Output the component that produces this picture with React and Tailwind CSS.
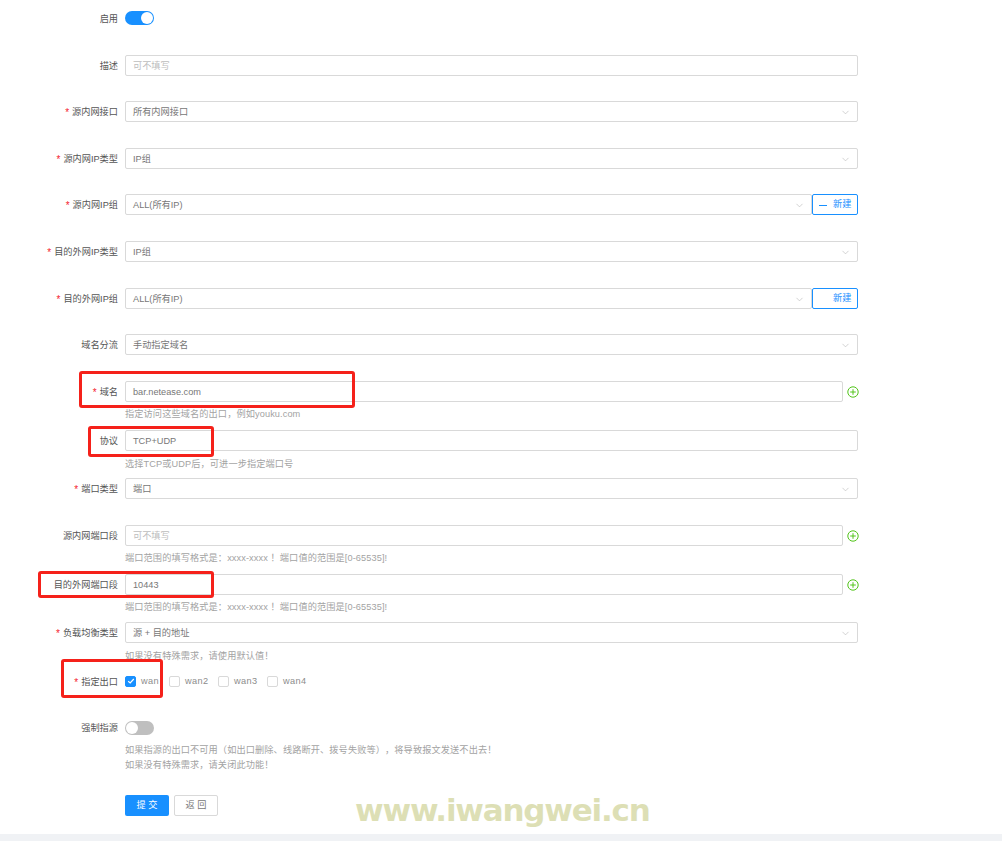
import React from 'react';
import { ChevronDown } from 'lucide-react';

const Label = ({ text, required }) => (
  <div className="w-[118px] mr-[7px] h-[21px] pt-[2px] shrink-0 flex items-center justify-end text-[9.2px] text-[#555555] whitespace-nowrap">
    {required && <span className="text-[#f5222d] mr-[3px] text-[10px] font-['Liberation_Sans']">*</span>}
    {text}
  </div>
);

const Hint = ({ text, className = 'mt-[5px]' }) => (
  <div className={`text-[9.2px] leading-[15px] tracking-[0.1px] text-[#a3a3a3] whitespace-nowrap [text-spacing-trim:space-all] ${className}`}>{text}</div>
);

const PlusIcon = () => (
  <svg className="ml-[4px] shrink-0" width="12" height="12" viewBox="0 0 12 12" fill="none" stroke="#52c41a" strokeWidth="1">
    <circle cx="6" cy="6" r="5.2" />
    <path d="M3.2 6h5.6M6 3.2v5.6" />
  </svg>
);

const Input = ({ value, placeholder, plus }) => (
  <div className="flex items-center">
    <div className={`${plus ? 'w-[718px]' : 'w-[733px]'} h-[21px] border border-[#d9d9d9] rounded-[2px] px-[7px] pt-[2px] flex items-center text-[9.2px]`}>
      {value ? <span className="text-[#777777]">{value}</span> : <span className="text-[#bdbdbd]">{placeholder}</span>}
    </div>
    {plus && <PlusIcon />}
  </div>
);

const Select = ({ value, add, minus }) => (
  <div className="flex items-stretch h-[21px]">
    <div className="flex-1 border border-[#d9d9d9] rounded-[2px] pl-[7px] pr-[6px] flex items-center justify-between text-[9.2px] text-[#777777]">
      <span className="pt-[2px]">{value}</span>
      <ChevronDown size={11} strokeWidth={1.3} className="text-[#b5b5b5] mt-[1px]" />
    </div>
    {add && (
      <div className="w-[46px] border border-[#1890ff] rounded-[2px] pt-[1px] flex items-center text-[9.2px] text-[#1890ff]">
        {minus ? <span className="w-[8px] h-px bg-[#1890ff] ml-[6px]" /> : <span className="w-[8px] ml-[6px]" />}
        <span className="ml-[6px]">新建</span>
      </div>
    )}
  </div>
);

const Switch = ({ on }) => (
  <div className={`w-[29px] h-[14px] rounded-full flex items-center px-[1px] ${on ? 'bg-[#1890ff] justify-end' : 'bg-[#bfbfbf] justify-start'}`}>
    <span className="w-[12px] h-[12px] rounded-full bg-white" />
  </div>
);

const Check = ({ text, checked, className }) => (
  <div className={`flex items-center ${className}`}>
    <span className={`w-[11px] h-[11px] rounded-[2px] flex items-center justify-center border ${checked ? 'bg-[#1890ff] border-[#1890ff]' : 'bg-white border-[#d9d9d9]'}`}>
      {checked && (
        <svg width="8" height="8" viewBox="0 0 8 8" fill="none" stroke="#fff" strokeWidth="1.2">
          <path d="M1.2 4.2 3.2 6 6.8 2" />
        </svg>
      )}
    </span>
    <span className="ml-[5px] text-[9.2px] tracking-[0.4px] text-[#8c8c8c]">{text}</span>
  </div>
);

const Row = ({ label, required, className, children }) => (
  <div className={`flex items-start w-[858px] ${className}`}>
    <Label text={label} required={required} />
    <div className="flex-1">{children}</div>
  </div>
);

const RedBox = ({ className }) => (
  <div className={`absolute border-[3px] border-[#f5211a] rounded-[3px] ${className}`} />
);

export default function App() {
  return (
    <div className="relative w-[1002px] h-[841px] bg-white overflow-hidden font-['Liberation_Sans','Noto_Sans_CJK_SC',sans-serif]">
      <div className="h-[834px] pt-[8px]">
        <Row label="启用" className="h-[47px]">
          <div className="pt-[3px]"><Switch on /></div>
        </Row>
        <Row label="描述" className="h-[46px]"><Input placeholder="可不填写" /></Row>
        <Row label="源内网接口" required className="h-[47px]"><Select value="所有内网接口" /></Row>
        <Row label="源内网IP类型" required className="h-[46px]"><Select value="IP组" /></Row>
        <Row label="源内网IP组" required className="h-[47px]"><Select value="ALL(所有IP)" add minus /></Row>
        <Row label="目的外网IP类型" required className="h-[47px]"><Select value="IP组" /></Row>
        <Row label="目的外网IP组" required className="h-[46px]"><Select value="ALL(所有IP)" add /></Row>
        <Row label="域名分流" className="h-[47px]"><Select value="手动指定域名" /></Row>
        <Row label="域名" required className="h-[49px]">
          <Input value="bar.netease.com" plus />
          <Hint text="指定访问这些域名的出口，例如youku.com" />
        </Row>
        <Row label="协议" className="h-[48px]">
          <Input value="TCP+UDP" />
          <Hint text="选择TCP或UDP后，可进一步指定端口号" className="mt-[6px]" />
        </Row>
        <Row label="端口类型" required className="h-[47px]"><Select value="端口" /></Row>
        <Row label="源内网端口段" className="h-[49px]">
          <Input placeholder="可不填写" plus />
          <Hint text="端口范围的填写格式是：xxxx-xxxx ！端口值的范围是[0-65535]!" />
        </Row>
        <Row label="目的外网端口段" className="h-[48px]">
          <Input value="10443" plus />
          <Hint text="端口范围的填写格式是：xxxx-xxxx ！端口值的范围是[0-65535]!" />
        </Row>
        <Row label="负载均衡类型" required className="h-[49px]">
          <Select value="源 + 目的地址" />
          <Hint text="如果没有特殊需求，请使用默认值！" className="mt-[6px]" />
        </Row>
        <Row label="指定出口" required className="h-[46px]">
          <div className="flex items-center h-[21px]">
            <Check text="wan" checked className="w-[44px]" />
            <Check text="wan2" className="w-[49px]" />
            <Check text="wan3" className="w-[49px]" />
            <Check text="wan4" />
          </div>
        </Row>
        <Row label="强制指源" className="h-[78px]">
          <div className="h-[21px] flex items-center"><Switch /></div>
          <Hint text="如果指源的出口不可用（如出口删除、线路断开、拨号失败等），将导致报文发送不出去！" className="mt-[5px]" />
          <Hint text="如果没有特殊需求，请关闭此功能！" className="mt-0" />
        </Row>
        <div className="flex ml-[125px] gap-[5px]">
          <button className="w-[44px] h-[21px] rounded-[2px] bg-[#1890ff] text-white text-[9.2px]">提 交</button>
          <button className="w-[44px] h-[21px] rounded-[2px] border border-[#d9d9d9] text-[#777777] text-[9.2px]">返 回</button>
        </div>
      </div>
      <div className="h-[7px] bg-[#f0f2f5]" />

      <RedBox className="left-[79px] top-[371px] w-[276px] h-[37px]" />
      <RedBox className="left-[88px] top-[426px] w-[126px] h-[31px]" />
      <RedBox className="left-[38px] top-[571px] w-[176px] h-[27px]" />
      <RedBox className="left-[61px] top-[659px] w-[102px] h-[39px]" />

      <div className="absolute left-[355px] top-[790px] text-[31px] leading-[40px] font-bold tracking-[-1.2px] text-[#dddfb5] font-['DejaVu_Sans',sans-serif] whitespace-nowrap">
        www.iwangwei.cn
      </div>
    </div>
  );
}
